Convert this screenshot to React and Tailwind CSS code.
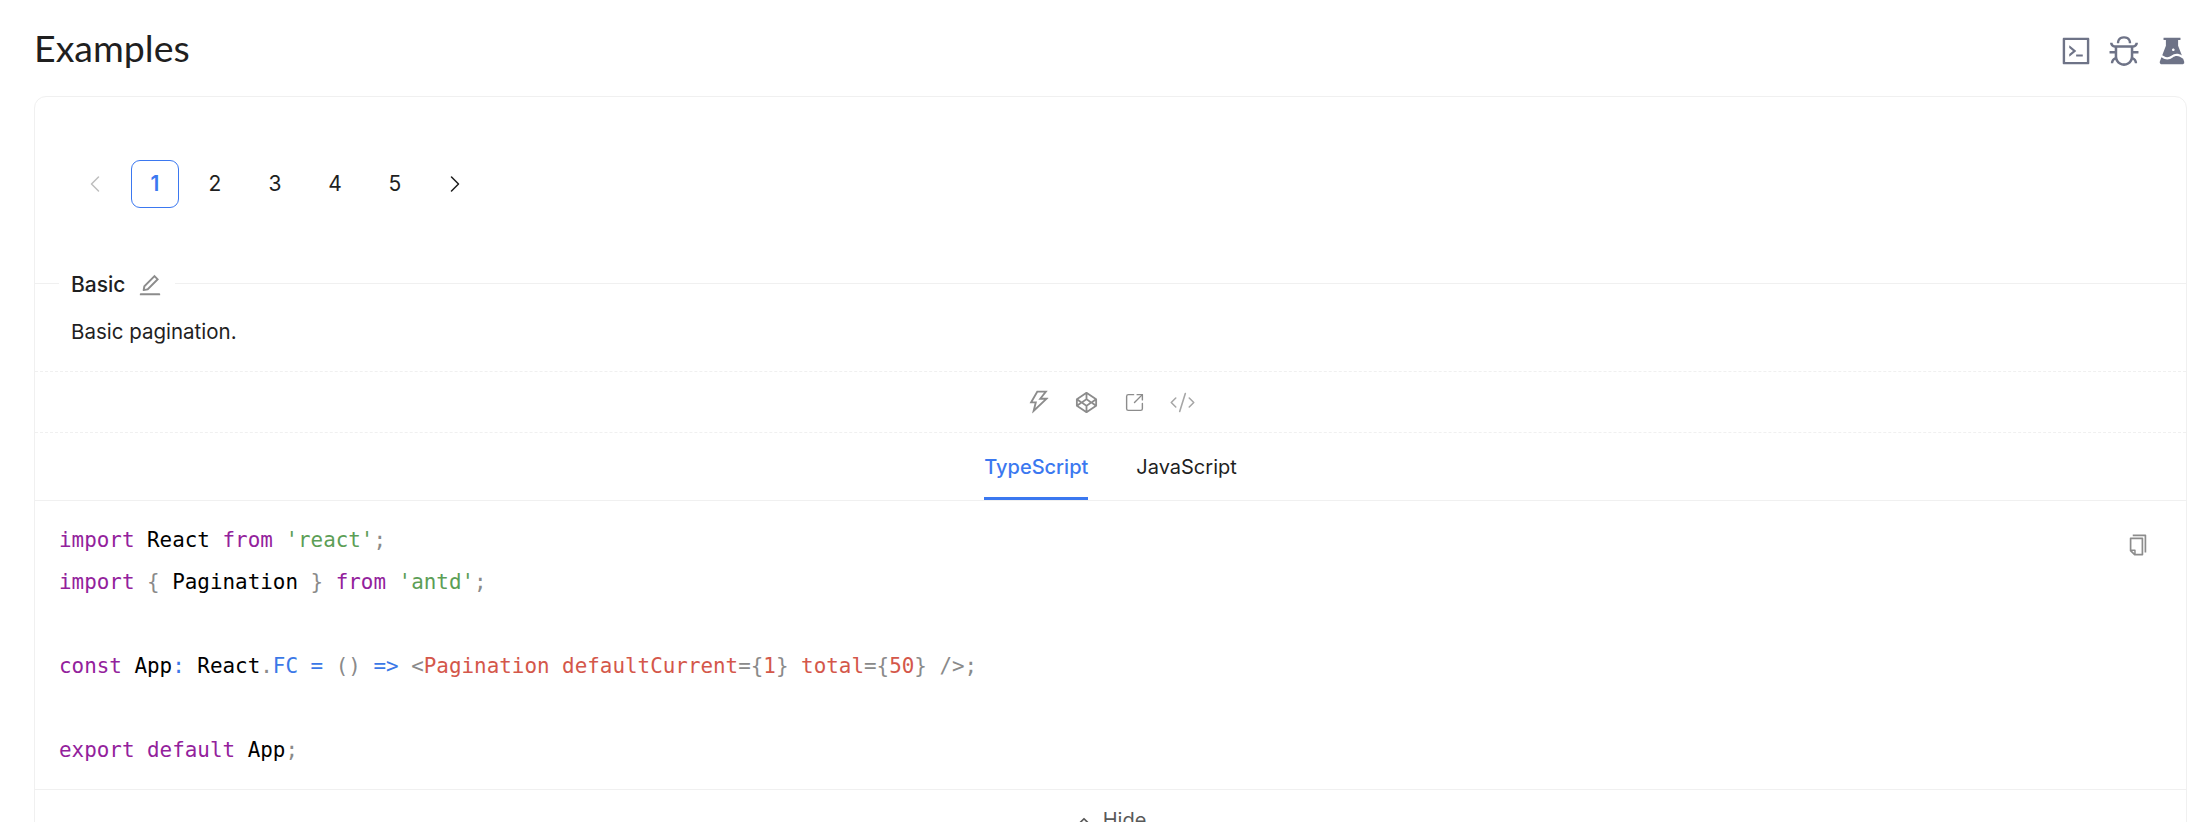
import { ChevronLeft, ChevronRight, ChevronUp, CodeXml, SquareArrowOutUpRight } from 'lucide-react'
import {
  AiOutlineCode,
  AiOutlineBug,
  AiFillExperiment,
  AiOutlineEdit,
  AiOutlineThunderbolt,
  AiOutlineCodepen,
  AiOutlineCopy,
} from 'react-icons/ai'

const kw = 'text-[#93219c]'
const pun = 'text-[#8a8a8a]'
const str = 'text-[#5c9e56]'
const blue = 'text-[#3b78e7]'
const tag = 'text-[#d4574a]'

const codeLines = [
  [['import', kw], [' React '], ['from', kw], [' '], ["'react'", str], [';', pun]],
  [['import', kw], [' '], ['{', pun], [' Pagination '], ['}', pun], [' '], ['from', kw], [' '], ["'antd'", str], [';', pun]],
  [],
  [
    ['const', kw], [' App'], [':', blue], [' React'], ['.', pun], ['FC', blue], [' '], ['=', blue], [' '], ['()', pun], [' '], ['=>', blue], [' '],
    ['<', pun], ['Pagination defaultCurrent', tag], ['=', pun], ['{', pun], ['1', tag], ['}', pun], [' '], ['total', tag], ['=', pun], ['{', pun], ['50', tag], ['}', pun], [' '], ['/>', pun], [';', pun],
  ],
  [],
  [['export', kw], [' '], ['default', kw], [' App'], [';', pun]],
]

function PageItem({ children, active }) {
  return (
    <li
      className={`flex h-12 w-12 items-center justify-center rounded-[9px] text-[21px] ${
        active ? 'border-[1.5px] border-[#3b78f0] font-semibold text-[#3b78f0]' : 'text-[#1f1f1f]'
      }`}
    >
      {children}
    </li>
  )
}

function ActionIcon({ children }) {
  return <span className="flex w-12 justify-center">{children}</span>
}

export default function App() {
  return (
    <div className="h-[822px] overflow-hidden bg-white pl-[34px] pr-[15px] font-['Inter','Liberation_Sans',sans-serif] text-[#1f1f1f]">
      <div className="flex h-[96px] items-start justify-between">
        <h2 className="mt-[24px] font-['Lato',sans-serif] text-[37.5px] leading-[48px] font-normal text-[#1f1f1f]">Examples</h2>
        <div className="mt-[34px] mr-[-2px] flex gap-[14px] text-[#6e7387]">
          <AiOutlineCode size={34} />
          <AiOutlineBug size={34} />
          <AiFillExperiment size={34} />
        </div>
      </div>

      <section className="rounded-t-[12px] border border-[#f0f0f0]">
        <div className="h-[186px] pt-[63px] pl-[36px]">
          <ul className="flex gap-3">
            <PageItem><ChevronLeft size={28} strokeWidth={1.3} className="text-[#bfbfbf]" /></PageItem>
            <PageItem active>1</PageItem>
            <PageItem>2</PageItem>
            <PageItem>3</PageItem>
            <PageItem>4</PageItem>
            <PageItem>5</PageItem>
            <PageItem><ChevronRight size={28} strokeWidth={1.3} /></PageItem>
          </ul>
        </div>

        <div className="relative h-[89px] border-t border-[#f0f0f0] border-b border-b-[#f0f0f0] [border-bottom-style:dashed]">
          <div className="absolute top-[-18px] left-[24px] flex h-[38px] items-center gap-[12px] bg-white px-3 text-[21px] font-medium">
            <span>Basic</span>
            <AiOutlineEdit size={26} className="text-[#8c8c8c]" />
          </div>
          <p className="pt-[32px] pl-[36px] text-[20.5px] leading-[32px]">Basic pagination.</p>
        </div>

        <div className="flex h-[61px] items-center justify-center border-b border-dashed border-[#f0f0f0] text-[#8c8c8c]">
          <ActionIcon><AiOutlineThunderbolt size={28} /></ActionIcon>
          <ActionIcon><AiOutlineCodepen size={27} /></ActionIcon>
          <ActionIcon><SquareArrowOutUpRight size={21} strokeWidth={1.6} /></ActionIcon>
          <ActionIcon><CodeXml size={27} strokeWidth={1.4} className="text-[#a6a6a6]" /></ActionIcon>
        </div>

        <div className="flex h-[68px] justify-center gap-12 border-b border-[#f0f0f0] text-[20px]">
          <div className="flex items-center border-b-[3px] border-[#3b78f0] pt-[3px] font-medium text-[#3b78f0]">TypeScript</div>
          <div className="flex items-center">JavaScript</div>
        </div>

        <div className="relative h-[288px] pt-[18px] pl-[24px]">
          <pre className="font-['DejaVu_Sans_Mono',monospace] text-[20.9px] leading-[42px] text-black">
            {codeLines.map((line, i) => (
              <div key={i} className="h-[42px]">
                {line.map(([text, color], j) => (
                  <span key={j} className={color}>{text}</span>
                ))}
              </div>
            ))}
          </pre>
          <AiOutlineCopy size={24} className="absolute top-[32px] right-[36px] text-[#8c8c8c]" />
        </div>

        <div className="flex h-[48px] items-start justify-center gap-[6px] border-t border-[#f0f0f0] pt-[18px] pr-[4px] text-[20px] leading-[24px] text-[#595959]">
          <ChevronUp size={26} strokeWidth={1.6} className="mt-[1px]" />
          <span>Hide</span>
        </div>
      </section>
    </div>
  )
}
